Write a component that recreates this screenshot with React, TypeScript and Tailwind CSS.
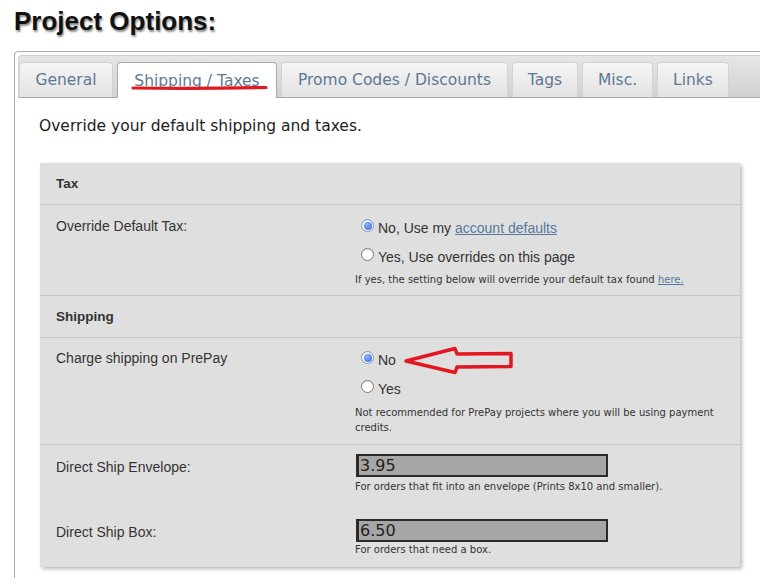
import React from "react";

const DV = "font-['DejaVu_Sans',Verdana,sans-serif]";
const LS = "font-['Liberation_Sans',Arial,sans-serif]";

function Radio({ checked }: { checked?: boolean }) {
  return (
    <span
      className={`mt-[-1px] ml-[6px] mr-[4px] w-[13px] h-[13px] shrink-0 rounded-full border bg-white flex items-center justify-center shadow-[inset_0_1px_1px_rgba(0,0,0,0.12)] ${
        checked ? "border-[#7c93c4]" : "border-[#7a7a7a]"
      }`}
    >
      {checked && (
        <span className="w-[8px] h-[8px] rounded-full bg-[radial-gradient(circle_at_40%_35%,#93b3f8,#2f62d6)]" />
      )}
    </span>
  );
}

function Tab({ label, w, active }: { label: string; w: string; active?: boolean }) {
  return (
    <div
      className={`${w} ${
        active
          ? "h-[36px] mb-[-1px] bg-white border-[#aaaaaa]"
          : "h-[35px] bg-[linear-gradient(#f5f5f5,#e3e3e3)] border-[#d3d3d3]"
      } border border-b-0 rounded-t-[4px] flex items-center justify-center text-[15.5px] leading-[18px] text-[#607893] whitespace-nowrap`}
    >
      {label}
    </div>
  );
}

function Help({ children }: { children: React.ReactNode }) {
  return <div className={`${DV} text-[10px] leading-[15px] text-[#333]`}>{children}</div>;
}

function Input({ value }: { value: string }) {
  return (
    <input
      readOnly
      value={value}
      className={`${DV} ml-[1px] block w-[252px] h-[23px] bg-[#a6a6a6] border-2 border-l-[3px] border-[#2a2a2a] pl-[1px] text-[16px] leading-[19px] text-[#222] outline-none`}
    />
  );
}

export default function App() {
  return (
    <div className={`relative w-[760px] h-[578px] overflow-hidden bg-white ${LS}`}>
      <h1 className="pl-[14px] pt-[6px] text-[26px] leading-[30px] font-bold text-[#111] [text-shadow:1px_2px_2px_rgba(0,0,0,0.45)]">
        Project Options:
      </h1>

      <div className="mt-[15px] ml-[14px] w-[800px] h-[600px] border border-[#aaaaaa] rounded-tl-[4px] p-[3px]">
        <div
          className={`${DV} flex items-end gap-[4px] pt-[6px] border border-[#d3d3d3] border-b-[#aaaaaa] rounded-t-[4px] bg-[linear-gradient(#e6e6e6,#d1d1d1)]`}
        >
          <Tab label="General" w="w-[94px]" />
          <Tab label="Shipping / Taxes" w="w-[160px]" active />
          <Tab label="Promo Codes / Discounts" w="w-[227px]" />
          <Tab label="Tags" w="w-[66px]" />
          <Tab label="Misc." w="w-[71px]" />
          <Tab label="Links" w="w-[72px]" />
        </div>

        <p className={`${DV} mt-[18px] pl-[21px] text-[15.5px] leading-[20px] text-[#222]`}>
          Override your default shipping and taxes.
        </p>

        <div className="mt-[27px] ml-[22px] w-[700px] bg-[#dfdfdf] shadow-[2px_2px_4px_rgba(0,0,0,0.28)] text-[#333]">
          {/* Tax header */}
          <div className="h-[42px] border-b border-[#c9c9c9] pl-[16px] pt-[13px] text-[13.5px] leading-[16px] font-bold">
            Tax
          </div>

          {/* Override default tax */}
          <div className="flex border-b border-[#c9c9c9]">
            <div className="w-[315px] shrink-0 pl-[16px] pt-[13px] text-[14px] leading-[16px]">
              Override Default Tax:
            </div>
            <div className="flex-1 pr-[10px] pt-[15px] pb-[8px]">
              <div className="flex items-start h-[16px] text-[14px] leading-[16px]">
                <Radio checked />
                <span>
                  No, Use my{" "}
                  <a className="text-[#55789e] underline" href="#">
                    account defaults
                  </a>
                </span>
              </div>
              <div className="mt-[13px] flex items-start h-[16px] text-[14px] leading-[16px]">
                <Radio />
                <span>Yes, Use overrides on this page</span>
              </div>
              <div className="mt-[7px]">
                <Help>
                  If yes, the setting below will override your default tax found{" "}
                  <a className="text-[#55789e] underline" href="#">
                    here.
                  </a>
                </Help>
              </div>
            </div>
          </div>

          {/* Shipping header */}
          <div className="h-[42px] border-b border-[#c9c9c9] pl-[16px] pt-[13px] text-[13.5px] leading-[16px] font-bold">
            Shipping
          </div>

          {/* Charge shipping */}
          <div className="flex border-b border-[#c9c9c9]">
            <div className="w-[315px] shrink-0 pl-[16px] pt-[12px] text-[14px] leading-[16px]">
              Charge shipping on PrePay
            </div>
            <div className="flex-1 pr-[10px] pt-[14px] pb-[9px]">
              <div className="flex items-start h-[16px] text-[14px] leading-[16px]">
                <Radio checked />
                <span>No</span>
              </div>
              <div className="mt-[13px] flex items-start h-[16px] text-[14px] leading-[16px]">
                <Radio />
                <span>Yes</span>
              </div>
              <div className="mt-[8px]">
                <Help>Not recommended for PrePay projects where you will be using payment credits.</Help>
              </div>
            </div>
          </div>

          {/* Direct ship */}
          <div className="flex pt-[9px]">
            <div className="w-[315px] shrink-0 pl-[16px] pt-[5px] text-[14px] leading-[16px]">
              Direct Ship Envelope:
            </div>
            <div className="flex-1">
              <Input value="3.95" />
              <div className="mt-[2px]">
                <Help>For orders that fit into an envelope (Prints 8x10 and smaller).</Help>
              </div>
            </div>
          </div>
          <div className="flex mt-[25px] pb-[10px]">
            <div className="w-[315px] shrink-0 pl-[16px] pt-[5px] text-[14px] leading-[16px]">
              Direct Ship Box:
            </div>
            <div className="flex-1">
              <Input value="6.50" />
              <Help>For orders that need a box.</Help>
            </div>
          </div>
        </div>
      </div>

      {/* red annotations */}
      <svg
        className="absolute left-0 top-0 pointer-events-none"
        width="760"
        height="578"
        viewBox="0 0 760 578"
      >
        <path
          d="M133 88 Q200 88.8 266 87.5"
          stroke="#e3171f"
          strokeWidth="3.2"
          fill="none"
          strokeLinecap="round"
        />
        <polygon
          points="406,361 455,348.5 457,354 511,353.5 511,366.5 457,367 455,372.5"
          stroke="#e3171f"
          strokeWidth="3.5"
          fill="none"
          strokeLinejoin="round"
        />
      </svg>
    </div>
  );
}
